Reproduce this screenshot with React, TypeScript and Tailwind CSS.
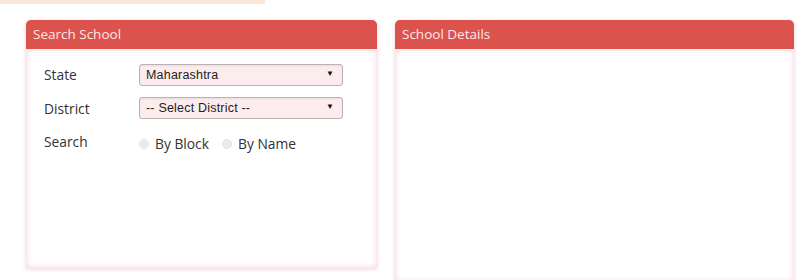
import React from "react";

function Select({ value }: { value: string }) {
  return (
    <div className="relative flex h-[22px] w-[204px] items-center rounded-[3px] border border-[#b9b3b4] bg-[#fdecee] pl-[6px] text-[12.5px] text-[#222] shadow-[inset_0_1px_2px_rgba(0,0,0,0.08)] [font-family:'Liberation_Sans',Arial,sans-serif]">
      <span className="tracking-[0.2px]">{value}</span>
      <span className="absolute right-[8px] top-[3px] text-[8px] text-[#111]">▼</span>
    </div>
  );
}

function Radio({ label }: { label: string }) {
  return (
    <div className="flex items-center gap-[6px]">
      <span className="h-[10px] w-[10px] rounded-full border border-[#e3e3e3] bg-[#ececec]" />
      <span>{label}</span>
    </div>
  );
}

export default function App() {
  return (
    <div className="relative h-[280px] w-[810px] overflow-hidden bg-white [font-family:'Open_Sans',sans-serif]">
      <div className="h-[4px] w-[265px] bg-[#fbe8dc]" />
      <div className="flex gap-[18px] pl-[26px] pt-[16px]">
        <div className="flex h-[248px] w-[351px] flex-col rounded-t-[5px] shadow-[0_1px_4px_rgba(230,180,190,0.6)]">
          <div className="flex h-[29px] items-center rounded-t-[5px] bg-[#dc524c] pl-[7px] text-[13.5px] text-[#fbeaea]">
            Search School
          </div>
          <div className="flex flex-1 flex-col bg-white pl-[18px] pt-[15px] text-[13.8px] text-[#333] shadow-[inset_0_0_6px_rgba(245,190,200,0.7)]">
            <div className="flex items-center">
              <span className="w-[95px]">State</span>
              <Select value="Maharashtra" />
            </div>
            <div className="mt-[11px] flex items-center">
              <span className="w-[95px] pt-[2px]">District</span>
              <Select value="-- Select District --" />
            </div>
            <div className="mt-[11px] flex items-center">
              <span className="w-[95px]">Search</span>
              <div className="flex items-center gap-[13px] pt-[3px]">
                <Radio label="By Block" />
                <Radio label="By Name" />
              </div>
            </div>
          </div>
        </div>
        <div className="flex h-[262px] w-[399px] flex-col rounded-t-[5px] shadow-[0_1px_4px_rgba(230,180,190,0.6)]">
          <div className="flex h-[29px] items-center rounded-t-[5px] bg-[#dc524c] pl-[7px] text-[13.5px] text-[#fbeaea]">
            School Details
          </div>
          <div className="flex-1 bg-white shadow-[inset_0_0_6px_rgba(245,190,200,0.7)]" />
        </div>
      </div>
    </div>
  );
}
